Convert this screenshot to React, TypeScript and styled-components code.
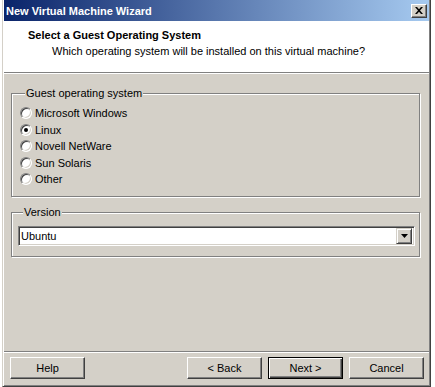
import styled, { createGlobalStyle } from 'styled-components';

const GlobalStyle = createGlobalStyle`
    html, body {
        margin: 0;
        padding: 0;
        background: #ffffff;
    }
    body {
        font-family: Tahoma, "Liberation Sans", Arial, sans-serif;
        font-size: 11px;
        color: #000;
    }
`;

const Window = styled.div`
    margin-left: 2px;
    width: 429px;
    height: 387px;
    box-sizing: border-box;
    background: #d4d0c8;
    border: 1px solid;
    border-color: #d4d0c8 #404040 #404040 #d4d0c8;
    border-top: none;
    padding: 0 1px 1px 1px;
    box-shadow: inset 1px 0 #fff, inset -1px -1px #808080;
    display: flex;
    flex-direction: column;
`;

const TitleBar = styled.div`
    height: 21px;
    flex-shrink: 0;
    display: flex;
    align-items: center;
    justify-content: space-between;
    padding: 0 2px 0 2px;
    background: linear-gradient(to right, #0a246a, #a6caf0);
    color: #fff;
    font-weight: bold;
    font-size: 11px;
`;

const TitleText = styled.span`
    white-space: nowrap;
`;

const CloseButton = styled.div`
    width: 16px;
    height: 14px;
    box-sizing: border-box;
    background: #d4d0c8;
    border: 1px solid;
    border-color: #fff #404040 #404040 #fff;
    box-shadow: inset -1px -1px #808080;
    display: flex;
    align-items: center;
    justify-content: center;
`;

const Header = styled.div`
    height: 52px;
    flex-shrink: 0;
    background: #fff;
    border-bottom: 1px solid #808080;
    box-shadow: 0 1px #fff;
    padding: 8px 0 0 24px;
    box-sizing: border-box;
`;

const HeaderTitle = styled.div`
    font-weight: bold;
    line-height: 13px;
`;

const HeaderSubtitle = styled.div`
    line-height: 13px;
    margin: 3px 0 0 24px;
`;

const Body = styled.div`
    flex: 1;
    display: flex;
    flex-direction: column;
    gap: 9px;
    padding: 14px 9px 0 7px;
`;

const GroupBox = styled.fieldset<{ $pad: string }>`
    margin: 0;
    min-width: 0;
    padding: ${({ $pad }) => $pad};
    border: 1px solid #808080;
    box-shadow: inset 1px 1px #fff, 1px 1px #fff;
`;

const GroupLegend = styled.legend`
    padding: 0 1px;
    margin-left: 5px;
    line-height: 13px;
    background: #d4d0c8;
`;

const RadioRow = styled.label`
    display: flex;
    align-items: center;
    height: 16.5px;
    gap: 3px;
`;

const RadioCircle = styled.span<{ $checked?: boolean }>`
    width: 12px;
    height: 12px;
    box-sizing: border-box;
    border-radius: 50%;
    background: #fff;
    border: 1px solid;
    border-color: #808080 #fff #fff #808080;
    box-shadow: inset 1px 1px #404040, inset -1px -1px #d4d0c8;
    display: flex;
    align-items: center;
    justify-content: center;

    &::after {
        content: '';
        width: 4px;
        height: 4px;
        border-radius: 50%;
        background: ${({ $checked }) => ($checked ? '#000' : 'transparent')};
    }
`;

const Select = styled.div`
    height: 20px;
    box-sizing: border-box;
    background: #fff;
    border: 1px solid;
    border-color: #808080 #fff #fff #808080;
    box-shadow: inset 1px 1px #404040, inset -1px -1px #d4d0c8;
    display: flex;
    align-items: center;
    justify-content: space-between;
    padding: 0 2px 0 2px;
`;

const DropButton = styled.div`
    width: 16px;
    height: 16px;
    box-sizing: border-box;
    background: #d4d0c8;
    border: 1px solid;
    border-color: #d4d0c8 #404040 #404040 #d4d0c8;
    box-shadow: inset 1px 1px #fff, inset -1px -1px #808080;
    display: flex;
    align-items: center;
    justify-content: center;
`;

const Footer = styled.div`
    flex-shrink: 0;
    display: flex;
    gap: 6px;
    border-top: 1px solid #808080;
    box-shadow: inset 0 1px #fff;
    padding: 5px 5px 6px 6px;
`;

const Button = styled.div<{ $default?: boolean; $push?: boolean }>`
    width: 75px;
    height: 22px;
    box-sizing: border-box;
    background: #d4d0c8;
    display: flex;
    align-items: center;
    justify-content: center;
    margin-left: ${({ $push }) => ($push ? 'auto' : '0')};
    border: 1px solid;
    border-color: ${({ $default }) => ($default ? '#000' : '#fff #404040 #404040 #fff')};
    box-shadow: ${({ $default }) =>
        $default
            ? 'inset 1px 1px #fff, inset -1px -1px #404040, inset -2px -2px #808080'
            : 'inset -1px -1px #808080'};
`;

const osList = ['Microsoft Windows', 'Linux', 'Novell NetWare', 'Sun Solaris', 'Other'];

const App = () => (
    <>
        <GlobalStyle />
        <Window>
            <TitleBar>
                <TitleText>New Virtual Machine Wizard</TitleText>
                <CloseButton>
                    <svg width="8" height="7" viewBox="0 0 8 7">
                        <path d="M0 0h2l2 2.3L6 0h2L5 3.5 8 7H6L4 4.7 2 7H0l3-3.5z" fill="#000" />
                    </svg>
                </CloseButton>
            </TitleBar>
            <Header>
                <HeaderTitle>Select a Guest Operating System</HeaderTitle>
                <HeaderSubtitle>Which operating system will be installed on this virtual machine?</HeaderSubtitle>
            </Header>
            <Body>
                <GroupBox $pad="5px 8px 8px 8px">
                    <GroupLegend>Guest operating system</GroupLegend>
                    {osList.map((os) => (
                        <RadioRow key={os}>
                            <RadioCircle $checked={os === 'Linux'} />
                            {os}
                        </RadioRow>
                    ))}
                </GroupBox>
                <GroupBox $pad="7px 4px 10px 6px">
                    <GroupLegend>Version</GroupLegend>
                    <Select>
                        <span>Ubuntu</span>
                        <DropButton>
                            <svg width="7" height="4" viewBox="0 0 7 4">
                                <path d="M0 0h7L3.5 4z" fill="#000" />
                            </svg>
                        </DropButton>
                    </Select>
                </GroupBox>
            </Body>
            <Footer>
                <Button>Help</Button>
                <Button $push>&lt; Back</Button>
                <Button $default>Next &gt;</Button>
                <Button>Cancel</Button>
            </Footer>
        </Window>
    </>
);

export default App;
